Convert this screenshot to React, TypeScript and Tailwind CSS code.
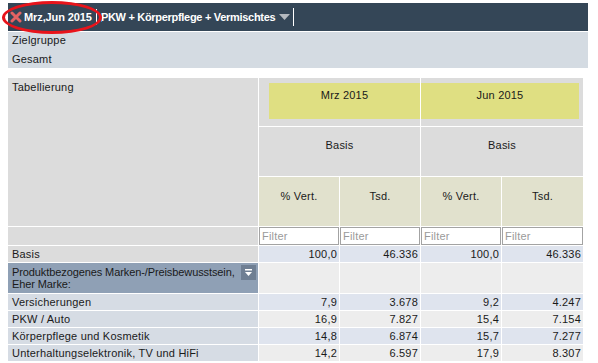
import React from "react";

const rows = [
  { label: "Versicherungen", v: ["7,9", "3.678", "9,2", "4.247"] },
  { label: "PKW / Auto", v: ["16,9", "7.827", "15,4", "7.154"] },
  { label: "Körperpflege und Kosmetik", v: ["14,8", "6.874", "15,7", "7.277"] },
  { label: "Unterhaltungselektronik, TV und HiFi", v: ["14,2", "6.597", "17,9", "8.307"] },
];

const CollapseIcon = () => (
  <svg width="9" height="9" viewBox="0 0 9 9">
    <rect x="1" y="1" width="7" height="1.5" fill="#fff" />
    <path d="M1 4 L8 4 L4.5 8 Z" fill="#fff" />
  </svg>
);

export default function App() {
  return (
    <div className="relative min-h-[363px] bg-white pl-2 pt-[3px] text-[11px] text-[#1a1a1a]" style={{ fontFamily: '"Liberation Sans", Arial, sans-serif' }}>
      {/* top bar */}
      <div className="flex h-[28px] w-[580px] items-center bg-[#344657] text-[11px] font-bold text-white">
        <svg width="12" height="12" viewBox="0 0 12 12" className="ml-[2px] mr-[2px]">
          <path d="M2 2 L10 10 M10 2 L2 10" stroke="#e46363" strokeWidth="3" strokeLinecap="round" />
        </svg>
        <span className="tracking-[-0.1px]">Mrz,Jun 2015</span>
        <div className="mx-[4px] h-[16px] w-px bg-white" />
        <span className="mr-[-1px] h-[9px] w-px bg-[#3b8ed8]" />
        <span className="tracking-[-0.3px]">PKW + Körperpflege + Vermischtes</span>
        <svg width="11" height="7" viewBox="0 0 11 7" className="ml-[4px]">
          <path d="M0 0 L11 0 L5.5 6 Z" fill="#b4b9bf" />
        </svg>
        <div className="ml-[3px] h-[18px] w-px bg-white" />
      </div>

      {/* target group */}
      <div className="mt-px flex h-[36px] w-[580px] flex-col justify-center bg-[#d4dbe2] pl-1 leading-[19px] tracking-[0.2px]">
        <div>Zielgruppe</div>
        <div>Gesamt</div>
      </div>

      {/* table */}
      <div className="mt-[10px] grid w-[575px] grid-cols-[250px_80px_80px_80px_81px] gap-px bg-white tracking-[0.2px]">
        <div className="row-span-3 bg-[#dcdcdc] pl-1 pt-[1px]">Tabellierung</div>
        <div className="col-span-2 h-[48px] bg-[#dcdcdc] pl-[10px] pt-[5px]">
          <div className="h-[36px] bg-[#dfdf82] pt-[4px] text-center">Mrz 2015</div>
        </div>
        <div className="col-span-2 h-[48px] bg-[#dcdcdc] pr-[4px] pt-[5px]">
          <div className="h-[36px] bg-[#dfdf82] pt-[4px] text-center">Jun 2015</div>
        </div>
        <div className="col-span-2 h-[49px] bg-[#dcdcdc] pt-[10px] text-center">Basis</div>
        <div className="col-span-2 h-[49px] bg-[#dcdcdc] pt-[10px] text-center">Basis</div>
        {["% Vert.", "Tsd.", "% Vert.", "Tsd."].map((h, i) => (
          <div key={i} className="h-[49px] bg-[#e1e1cd] pt-[11px] text-center">{h}</div>
        ))}

        <div className="h-[18px] bg-[#dcdcdc]" />
        {[0, 1, 2, 3].map((i) => (
          <input
            key={i}
            placeholder="Filter"
            className="h-[18px] w-full border border-[#a3a3a3] bg-white px-[2px] text-[11px] placeholder:text-[#9a9a9a] focus:outline-none"
          />
        ))}

        <div className="h-[16px] bg-[#dcdcdc] pl-1 leading-[16px]">Basis</div>
        {["100,0", "46.336", "100,0", "46.336"].map((v, i) => (
          <div key={i} className="h-[16px] bg-[#dfe4ee] pr-[2px] text-right leading-[16px]">{v}</div>
        ))}

        <div className="relative h-[30px] bg-[#8fa0b5] pl-1 pt-[3px] leading-[12px] tracking-[-0.1px]">
          <div>Produktbezogenes Marken-/Preisbewusstsein,</div>
          <div>Eher Marke:</div>
          <div className="absolute right-[2px] top-[2px] flex h-[15px] w-[15px] items-center justify-center bg-[#6f7f93]">
            <CollapseIcon />
          </div>
        </div>
        {[0, 1, 2, 3].map((i) => (
          <div key={i} className="bg-[#ededed]" />
        ))}

        {rows.map((r, ri) => (
          <React.Fragment key={r.label}>
            <div className="h-[16px] bg-[#d6dce4] pl-1 leading-[16px]">{r.label}</div>
            {r.v.map((v, i) => (
              <div
                key={i}
                className={`h-[16px] pr-[2px] text-right leading-[16px] ${ri % 2 === 0 ? "bg-[#dfe4ee]" : "bg-[#ededed]"}`}
              >
                {v}
              </div>
            ))}
          </React.Fragment>
        ))}
      </div>

      {/* red annotation ellipse */}
      <div className="pointer-events-none absolute left-[2px] top-[1px] h-[33px] w-[100px] rounded-[50%] border-[3px] border-[#e8141b]" />
    </div>
  );
}
